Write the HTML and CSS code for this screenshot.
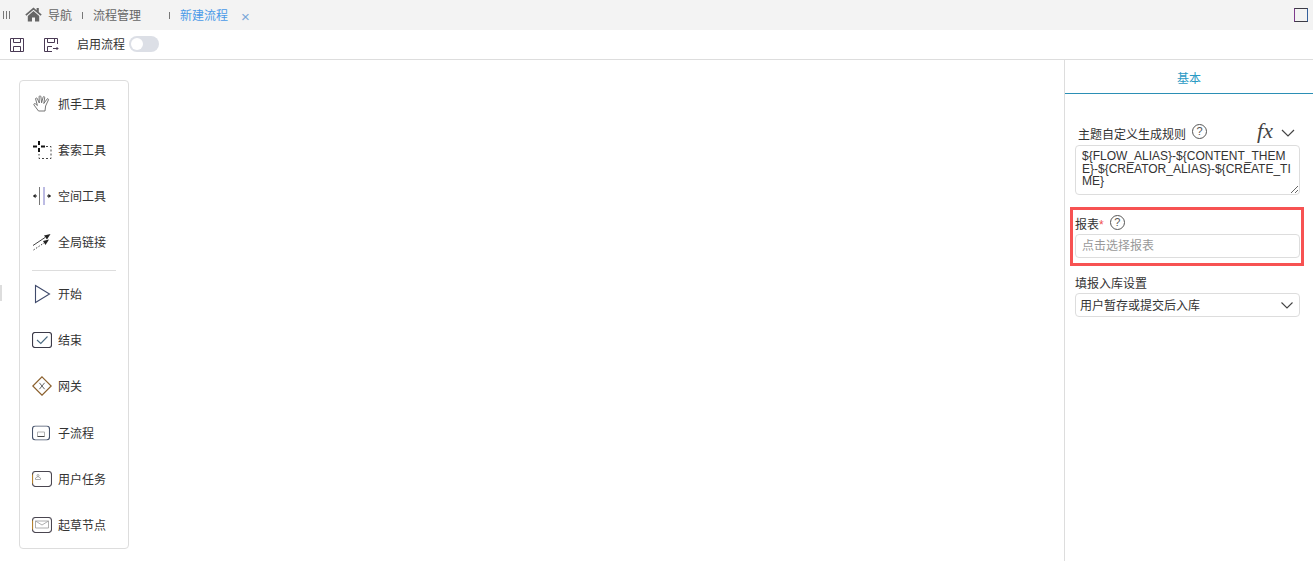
FILE: index.html
```html
<!DOCTYPE html>
<html lang="zh-CN">
<head>
    <meta charset="UTF-8">
    <title>新建流程</title>
    <link rel="stylesheet" href="styles.css">
</head>
<body>
    <header class="tabbar">
        <span class="tab-grip"><i></i><i></i><i></i></span>
        <svg class="home-icon" width="17" height="15" viewBox="0 0 17 15"><path d="M8.5 0.5 L0.3 7.6 L1.4 8.8 L8.5 2.7 L15.6 8.8 L16.7 7.6 L13.8 5.1 L13.8 1 L11.6 1 L11.6 3.2 Z M8.5 4 L2.8 8.9 L2.8 14.6 L7 14.6 L7 10.6 L10 10.6 L10 14.6 L14.2 14.6 L14.2 8.9 Z" fill="#666"/></svg>
        <span class="tab tab-nav">导航</span>
        <span class="tab-sep"></span>
        <span class="tab tab-manage">流程管理</span>
        <span class="tab-sep tab-sep-far"></span>
        <span class="tab tab-active">新建流程</span>
        <span class="tab-close">×</span>
        <span class="tab-square"></span>
    </header>

    <div class="toolbar">
        <svg class="save-icon" width="14" height="14" viewBox="0 0 14 14" fill="none" stroke="#4a3a55"><path d="M0.5 0.5H13.5V13.5H0.5Z"/><path d="M3.5 0.5V4.5H10.5V0.5"/><path d="M3.5 13.5V8.5H10.5V13.5"/></svg>
        <svg class="saveas-icon" width="15" height="14" viewBox="0 0 15 14" fill="none" stroke="#4a3a55"><path d="M13.5 6V0.5H0.5V13.5H8"/><path d="M3.5 0.5V4.5H10.5V0.5"/><path d="M3.5 13.5V8.5H8"/><path d="M9 10.5H14M12.5 9L14 10.5L12.5 12"/></svg>
        <span class="toolbar-label">启用流程</span>
        <span class="switch"><span class="switch-knob"></span></span>
    </div>

    <main class="workspace">
        <section class="canvas">
            <span class="side-handle"></span>
            <nav class="tools">
                <div class="tool">
                    <svg width="20" height="20" viewBox="0 0 20 20" fill="none" stroke="#666" stroke-width="0.9"><path d="M6.5 17 L2 11 C1.3 10 2.6 9.1 3.5 9.9 L5.4 11.5 L3.6 5 C3.4 3.9 4.9 3.5 5.3 4.6 L7.3 9 L7.1 2.7 C7.2 1.5 8.8 1.5 8.9 2.7 L9.6 8.8 L11.1 3.2 C11.4 2.1 12.9 2.5 12.7 3.7 L11.8 9.5 L15 5.1 C15.6 4.2 16.9 4.9 16.4 6 L13.6 12 L13 17 Z"/></svg>
                    <span>抓手工具</span>
                </div>
                <div class="tool">
                    <svg width="20" height="20" viewBox="0 0 20 20" fill="none"><path d="M7 1V5M7 8V12M1 6.5H5M9 6.5H13" stroke="#111" stroke-width="2"/><path d="M14 6.5H19V18.5H7V14" stroke="#444" stroke-dasharray="2 2"/></svg>
                    <span>套索工具</span>
                </div>
                <div class="tool">
                    <svg width="20" height="20" viewBox="0 0 20 20" fill="none"><path d="M7.5 1V19" stroke="#777"/><path d="M12 1V19" stroke="#7a78c8"/><path d="M1.5 10H5" stroke="#222"/><path d="M1 10L3.6 7.8V12.2Z M19 10L16.4 7.8V12.2Z" fill="#222"/><path d="M15 10H18.5" stroke="#222"/></svg>
                    <span>空间工具</span>
                </div>
                <div class="tool">
                    <svg width="20" height="20" viewBox="0 0 20 20" fill="none"><path d="M1 13.5L13 5.5" stroke="#444"/><path d="M12 3.5L18.5 2L15 7.5Z" fill="#222"/><path d="M1.5 18L12 11" stroke="#444" stroke-dasharray="1.5 1.5"/><path d="M11 9L17 7.5L13.5 13Z" fill="#222"/></svg>
                    <span>全局链接</span>
                </div>
                <div class="tools-divider"></div>
                <div class="tool">
                    <svg width="20" height="20" viewBox="0 0 20 20" fill="none" stroke="#3f4a6b" stroke-width="1.1"><path d="M3.5 1.5L17.5 10L3.5 18.5Z"/></svg>
                    <span>开始</span>
                </div>
                <div class="tool">
                    <svg width="20" height="16" viewBox="0 0 20 16" fill="none"><rect x="0.5" y="0.5" width="19" height="15" rx="2.5" stroke="#3c3a48" stroke-width="1.2"/><path d="M5 8L8.8 11.5L15.5 4.5" stroke="#4a6a80" stroke-width="1.1"/></svg>
                    <span>结束</span>
                </div>
                <div class="tool tool-gap">
                    <svg width="20" height="20" viewBox="0 0 20 20" fill="none"><path d="M10 0.8L19.2 10L10 19.2L0.8 10Z" stroke="#8a5f2c" stroke-width="1.2"/><path d="M7.4 6.8L12.6 13.2M12.6 6.8L7.4 13.2" stroke="#666"/></svg>
                    <span>网关</span>
                </div>
                <div class="tool">
                    <svg width="18" height="15" viewBox="0 0 18 15" fill="none"><rect x="0.5" y="0.5" width="17" height="14" rx="3" stroke="#47536b" stroke-width="1.1"/><path d="M5.5 6.5H12.5M5.5 6.5V11M12.5 6.5V11" stroke="#aaa" stroke-width="0.9"/><path d="M5.5 11H12.5" stroke="#444"/></svg>
                    <span>子流程</span>
                </div>
                <div class="tool">
                    <svg width="20" height="16" viewBox="0 0 20 16" fill="none"><rect x="0.5" y="0.5" width="19" height="15" rx="3" stroke="#4a4650" stroke-width="1.1"/><path d="M0.5 3.5V12.5" stroke="#b5822e" stroke-width="1.1"/><path d="M3.5 8.5V7L6 5.5L8.5 7V8.5Z M5 4.5A1 1 0 1 1 7 4.5A1 1 0 1 1 5 4.5" stroke="#999" stroke-width="0.8"/></svg>
                    <span>用户任务</span>
                </div>
                <div class="tool">
                    <svg width="20" height="16" viewBox="0 0 20 16" fill="none"><rect x="0.5" y="0.5" width="19" height="15" rx="3" stroke="#4a4650" stroke-width="1.1"/><path d="M0.5 3.5V12.5" stroke="#b5822e" stroke-width="1.1"/><path d="M3.5 4H16.5V11H3.5Z M3.5 4L10 8L16.5 4" stroke="#999" stroke-width="0.8"/></svg>
                    <span>起草节点</span>
                </div>
            </nav>
        </section>

        <aside class="panel">
            <div class="panel-tab">基本</div>
            <div class="panel-body">
                <div class="rule-head">
                    <label class="rule-label">主题自定义生成规则</label>
                    <span class="help">?</span>
                    <span class="fx">fx</span>
                    <svg class="chevron" width="14" height="8" viewBox="0 0 14 8" fill="none" stroke="#444" stroke-width="1.2"><path d="M1 1L7 7L13 1"/></svg>
                </div>
                <textarea class="rule-text" spellcheck="false">${FLOW_ALIAS}-${CONTENT_THEME}-${CREATOR_ALIAS}-${CREATE_TIME}</textarea>

                <div class="report-box">
                    <div class="report-head">
                        <label class="report-label">报表<em>*</em></label>
                        <span class="help">?</span>
                    </div>
                    <input class="report-input" type="text" placeholder="点击选择报表">
                </div>

                <label class="store-label">填报入库设置</label>
                <div class="select">
                    <span>用户暂存或提交后入库</span>
                    <svg width="12" height="7" viewBox="0 0 12 7" fill="none" stroke="#444" stroke-width="1.1"><path d="M0.5 0.5L6 6L11.5 0.5"/></svg>
                </div>
            </div>
        </aside>
    </main>
</body>
</html>
```

FILE: styles.css
```css
html, body {
    margin: 0;
    height: 100%;
    overflow: hidden;
}

body {
    font-family: "Liberation Sans", "Noto Sans CJK SC", sans-serif;
    font-size: 12px;
    color: #333;
    background: #fff;
}

.tabbar {
    display: flex;
    align-items: center;
    height: 30px;
    background: #f3f3f3;
}

.tab-grip {
    display: flex;
    gap: 2px;
    margin-left: 3px;
    width: 22px;
}

.tab-grip i {
    width: 1px;
    height: 8px;
    background: #777;
}

.home-icon {
    margin-bottom: 1px;
}

.tab {
    margin-top: 2px;
    color: #666;
    line-height: 28px;
}

.tab-nav {
    margin-left: 6px;
}

.tab-sep {
    width: 1px;
    height: 7px;
    margin-left: 10px;
    background: #777;
}

.tab-manage {
    margin-left: 10px;
}

.tab-sep-far {
    margin-left: 28px;
}

.tab-active {
    margin-left: 10px;
    color: #4a9ae8;
}

.tab-close {
    margin-left: 13px;
    margin-top: 2px;
    font-size: 15px;
    color: #7aa7d8;
}

.tab-square {
    box-sizing: border-box;
    width: 14px;
    height: 14px;
    margin-left: auto;
    margin-right: 5px;
    border: 1px solid #3c3a45;
    border-left-color: #7d3a8c;
    border-right-color: #35609c;
}

.toolbar {
    display: flex;
    align-items: center;
    height: 29px;
    border-bottom: 1px solid #ddd;
}

.save-icon {
    margin-left: 10px;
}

.saveas-icon {
    margin-left: 20px;
}

.toolbar-label {
    margin-left: 18px;
    margin-bottom: 2px;
}

.switch {
    display: flex;
    align-items: center;
    width: 30px;
    height: 16px;
    margin-left: 4px;
    margin-bottom: 1px;
    border-radius: 8px;
    background: #dcdfe6;
}

.switch-knob {
    width: 12px;
    height: 12px;
    margin-left: 2px;
    border-radius: 50%;
    background: #fff;
}

.workspace {
    display: flex;
    height: 501px;
}

.canvas {
    position: relative;
    flex: 1;
    padding: 20px 0 0 19px;
}

.side-handle {
    position: absolute;
    left: 0;
    top: 225px;
    width: 2px;
    height: 16px;
    background: #ddd;
}

.tools {
    box-sizing: border-box;
    width: 110px;
    height: 469px;
    border: 1px solid #ddd;
    border-radius: 4px;
}

.tool {
    display: flex;
    align-items: center;
    height: 46px;
    position: relative;
    padding-left: 38px;
}

.tool span {
    padding-bottom: 2px;
}

.tool svg {
    position: absolute;
    left: 12px;
    top: 50%;
    transform: translateY(-50%);
}

.tool-gap {
    margin-bottom: 1px;
}

.tools-divider {
    height: 1px;
    margin: 5px 12px 0;
    background: #ddd;
}

.panel {
    width: 248px;
    border-left: 1px solid #ddd;
}

.panel-tab {
    height: 33px;
    line-height: 39px;
    text-align: center;
    color: #2b9ac4;
    border-bottom: 1px solid #2b8fb5;
}

.panel-body {
    padding: 0 13px 0 10px;
}

.rule-head {
    display: flex;
    align-items: center;
    height: 24px;
    margin-top: 27px;
    padding-left: 3px;
}

.help {
    display: inline-block;
    box-sizing: border-box;
    width: 15px;
    height: 15px;
    margin-left: 6px;
    margin-bottom: 4px;
    border: 1px solid #555;
    border-radius: 50%;
    font-size: 11px;
    line-height: 13px;
    text-align: center;
    color: #555;
}

.fx {
    margin-left: auto;
    margin-bottom: 4px;
    font-family: "Liberation Serif", serif;
    font-style: italic;
    font-size: 22px;
    color: #444;
}

.chevron {
    margin: 0 5px 0 8px;
}

.rule-text {
    display: block;
    box-sizing: border-box;
    width: 225px;
    height: 50px;
    margin: 0;
    padding: 4px 6px;
    border: 1px solid #ddd;
    border-radius: 4px;
    outline: none;
    font-family: "Liberation Sans", "Noto Sans CJK SC", sans-serif;
    font-size: 12px;
    line-height: 12.5px;
    color: #333;
}

.report-box {
    box-sizing: border-box;
    width: 234px;
    height: 59px;
    margin: 12px 0 0 -5px;
    padding: 4px 0 0 2px;
    border: 3px solid #f75252;
}

.report-head {
    display: flex;
    align-items: center;
    height: 20px;
}

.report-label {
    padding-bottom: 2px;
}

.report-head em {
    color: #f05050;
    font-style: normal;
}

.report-input {
    display: block;
    box-sizing: border-box;
    width: 225px;
    height: 24px;
    margin: 0;
    padding: 0 6px;
    border: 1px solid #ddd;
    border-radius: 4px;
    outline: none;
    font-family: "Liberation Sans", "Noto Sans CJK SC", sans-serif;
    font-size: 12px;
}

.report-input::placeholder {
    color: #999;
}

.store-label {
    display: block;
    margin-top: 10px;
    line-height: 17px;
}

.select {
    display: flex;
    align-items: center;
    justify-content: space-between;
    box-sizing: border-box;
    width: 225px;
    height: 24px;
    padding: 0 6px 0 4px;
    border: 1px solid #ddd;
    border-radius: 4px;
}

.select span {
    padding-bottom: 2px;
}
```
